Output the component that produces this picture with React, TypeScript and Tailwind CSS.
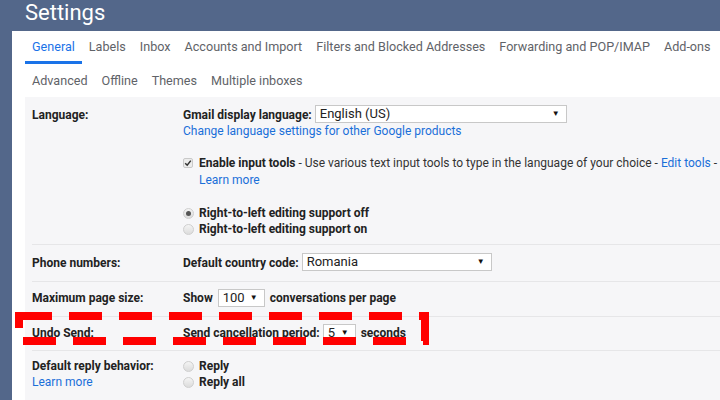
import React from "react";

const TABS_TOP = [
  "General",
  "Labels",
  "Inbox",
  "Accounts and Import",
  "Filters and Blocked Addresses",
  "Forwarding and POP/IMAP",
  "Add-ons",
];
const TABS_BOTTOM = ["Advanced", "Offline", "Themes", "Multiple inboxes"];

const Select: React.FC<{ value: string; className: string }> = ({ value, className }) => (
  <span
    className={`inline-flex items-center justify-between h-[18px] bg-white border border-[#c8c8c8] pl-[4px] pr-[6px] font-normal text-[13px] text-[#222] ${className}`}
  >
    <span>{value}</span>
    <span className="text-[8px] text-[#111]">▼</span>
  </span>
);

const Radio: React.FC<{ checked?: boolean }> = ({ checked }) => (
  <span className="w-[11px] h-[11px] rounded-full border border-[#cfcfcf] bg-gradient-to-b from-[#f4f4f4] to-[#dcdcdc] flex items-center justify-center mr-[5px]">
    {checked && <span className="w-[5px] h-[5px] rounded-full bg-[#555]" />}
  </span>
);

const Row: React.FC<{ label: React.ReactNode; className: string; children: React.ReactNode }> = ({
  label,
  className,
  children,
}) => (
  <div className={`flex border-b border-[#e6e6e8] ${className}`}>
    <div className="w-[151px] shrink-0 font-bold text-[#222]">{label}</div>
    <div className="flex-1">{children}</div>
  </div>
);

export default function App() {
  return (
    <div className="w-[720px] h-[400px] overflow-hidden bg-[#53678a] font-['Roboto',sans-serif] whitespace-nowrap">
      <div className="h-[31px] pl-[25px] text-white text-[22px] leading-[26px]">Settings</div>
      <div className="ml-[12px] bg-white h-[369px] flex flex-col">
        <div className="flex pl-[13px] text-[12.6px] text-[#5f6368]">
          {TABS_TOP.map((t, i) => (
            <div
              key={t}
              className={`h-[33px] px-[7px] flex items-center border-b-[3px] ${
                i === 0 ? "border-[#1a73e8] text-[#1a73e8]" : "border-transparent"
              }`}
            >
              <span className="pt-[3px]">{t}</span>
            </div>
          ))}
        </div>
        <div className="flex pl-[13px] text-[12.6px] text-[#5f6368]">
          {TABS_BOTTOM.map((t) => (
            <div key={t} className="h-[33px] px-[7px] flex items-center">
              <span className="pt-[2px]">{t}</span>
            </div>
          ))}
        </div>

        <div className="relative flex-1 ml-[13px] bg-[#f6f6f8] pl-[7px] text-[12px] text-[#222]">
          <Row label={<div className="h-[18px] leading-[20px]">Language:</div>} className="pt-[8px] pb-[7px]">
            <div className="h-[18px] flex items-center">
              <span className="font-bold mr-[3px] pt-[2px]">Gmail display language:</span>
              <Select value="English (US)" className="w-[252px]" />
            </div>
            <div className="h-[16px] leading-[17px] text-[#1a6fd8]">
              Change language settings for other Google products
            </div>
            <div className="mt-[16px] h-[16px] flex items-center">
              <span className="w-[10px] h-[10px] border border-[#c9c9c9] bg-[#ececec] rounded-[2px] mr-[6px] flex items-center justify-center">
                <svg width="8" height="8" viewBox="0 0 8 8">
                  <path d="M1.2 4.2 L3.2 6.2 L6.8 1.6" stroke="#333" strokeWidth="1.5" fill="none" />
                </svg>
              </span>
              <span className="font-bold">Enable input tools</span>
              <span className="text-[#333]">&nbsp;- Use various text input tools to type in the language of your choice -&nbsp;</span>
              <span className="text-[#1a6fd8]">Edit tools</span>
              <span className="text-[#333]">&nbsp;- Learn more</span>
            </div>
            <div className="h-[17px] leading-[19px] pl-[16px] text-[#1a6fd8]">Learn more</div>
            <div className="mt-[17px] h-[16px] flex items-center font-bold">
              <Radio checked />
              Right-to-left editing support off
            </div>
            <div className="h-[16px] flex items-center font-bold">
              <Radio />
              Right-to-left editing support on
            </div>
          </Row>

          <Row label={<div className="h-[18px] leading-[20px]">Phone numbers:</div>} className="pt-[8px] pb-[10px]">
            <div className="h-[18px] flex items-center">
              <span className="font-bold mr-[3px] pt-[2px]">Default country code:</span>
              <Select value="Romania" className="w-[190px]" />
            </div>
          </Row>

          <Row label={<div className="h-[18px] leading-[18px]">Maximum page size:</div>} className="pt-[7px] pb-[9px]">
            <div className="h-[18px] flex items-center font-bold">
              <span className="mr-[5px]">Show</span>
              <Select value="100" className="w-[47px]" />
              <span className="ml-[5px]">conversations per page</span>
            </div>
          </Row>

          <Row label={<div className="h-[18px] leading-[18px]">Undo Send:</div>} className="pt-[7px] pb-[8px]">
            <div className="h-[18px] flex items-center font-bold">
              <span className="mr-[3px]">Send cancellation period:</span>
              <Select value="5" className="w-[33px]" />
              <span className="ml-[5px]">seconds</span>
            </div>
          </Row>

          <Row
            label={
              <div>
                <div className="h-[16px] leading-[16px]">Default reply behavior:</div>
                <div className="h-[16px] leading-[16px] font-normal text-[#1a6fd8]">Learn more</div>
              </div>
            }
            className="pt-[7px] pb-[11px]"
          >
            <div className="h-[16px] flex items-center font-bold">
              <Radio />
              Reply
            </div>
            <div className="h-[16px] flex items-center font-bold">
              <Radio />
              Reply all
            </div>
          </Row>

          {/* red dashed highlight around Undo Send */}
          <svg className="absolute left-[-10px] top-[215px]" width="420" height="40" viewBox="0 0 420 40">
            <rect
              x="4"
              y="4"
              width="406"
              height="25"
              fill="none"
              stroke="#ff0000"
              strokeWidth="8"
              strokeDasharray="33 17"
            />
          </svg>
        </div>
      </div>
    </div>
  );
}
